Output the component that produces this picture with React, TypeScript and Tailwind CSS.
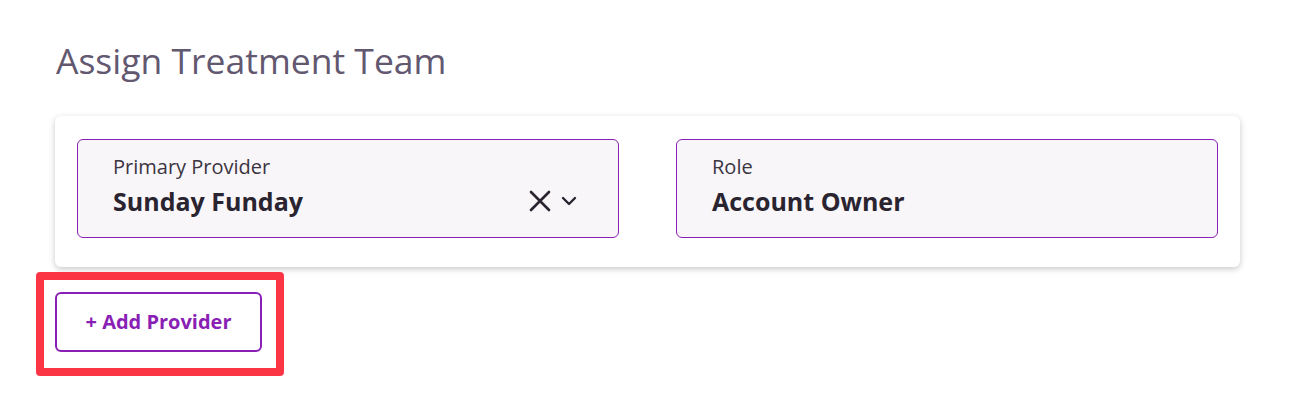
import React from 'react';

const font = { fontFamily: '"Open Sans", "Noto Sans", sans-serif' };

const Field: React.FC<{ label: string; value: string; clearable?: boolean }> = ({ label, value, clearable }) => {
  return (
    <div className="h-[99px] rounded-[6px] border border-[#8a1fb5] bg-[#f8f6f9] pl-[35px] pr-[41px] pt-[14px]">
      <div className="text-[20px] leading-[26px] text-[#3b3441]">{label}</div>
      <div className="flex items-center justify-between mt-[4px] h-[34px]">
        <span className="text-[25px] leading-[34px] font-bold text-[#2a2430]">{value}</span>
        {clearable && (
          <div className="flex items-center gap-[10px] text-[#2a2430]">
            <svg width="22" height="22" viewBox="0 0 22 22" fill="none" stroke="currentColor" strokeWidth="2.6" strokeLinecap="round">
              <path d="M2 2 L20 20 M20 2 L2 20" />
            </svg>
            <svg width="16" height="10" viewBox="0 0 16 10" fill="none" stroke="currentColor" strokeWidth="2.4" strokeLinecap="round" strokeLinejoin="round">
              <path d="M2 2 L8 8 L14 2" />
            </svg>
          </div>
        )}
      </div>
    </div>
  );
};

export default function App() {
  return (
    <div className="w-[1302px] h-[399px] bg-white pl-[55px] pt-[38px]" style={font}>
      <h2 className="text-[35.5px] leading-[44px] text-[#625870] pl-[1px]">Assign Treatment Team</h2>
      <div className="mt-[34px] w-[1185px] rounded-[6px] bg-white shadow-[0_2px_6px_rgba(0,0,0,0.22)] px-[22px] pt-[23px] pb-[29px] grid grid-cols-2 gap-[57px]">
        <Field label="Primary Provider" value="Sunday Funday" clearable />
        <Field label="Role" value="Account Owner" />
      </div>
      <div className="mt-[5px] -ml-[19px] w-[248px] rounded-[4px] border-[8px] border-[#fc3545] pl-[11px] pt-[12px] pb-[16px]">
        <button className="w-[207px] h-[60px] rounded-[6px] border-2 border-[#8a1fb5] text-[#8a1fb5] text-[20px] font-bold bg-white">
          + Add Provider
        </button>
      </div>
    </div>
  );
}
